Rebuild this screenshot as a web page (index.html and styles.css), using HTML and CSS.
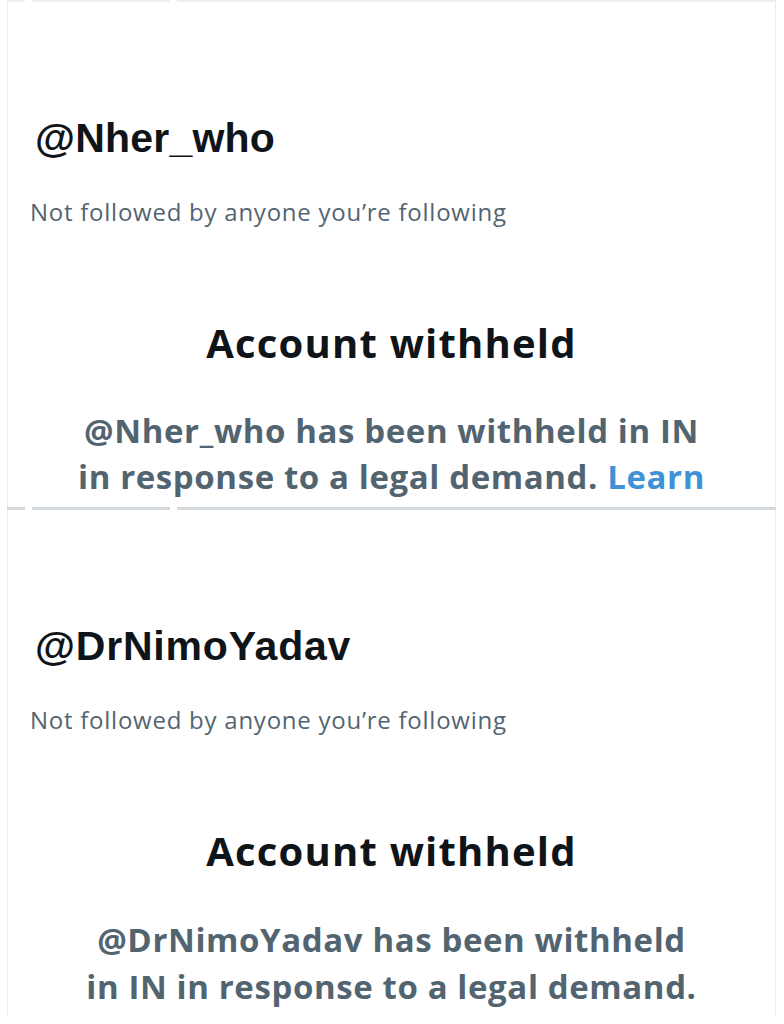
FILE: index.html
```html
<!DOCTYPE html>
<html lang="en">
<head>
<meta charset="utf-8">
<title>Account withheld</title>
<link rel="stylesheet" href="styles.css">
</head>
<body>
<div class="page">
  <div class="tabline tabline-top">
    <span class="seg seg-a"></span><span class="seg seg-b"></span><span class="seg seg-c"></span>
  </div>
  <section class="panel">
    <h1 class="handle">@Nher_who</h1>
    <p class="followers">Not followed by anyone you’re following</p>
    <h2 class="title">Account withheld</h2>
    <p class="body">
      <span class="line">@Nher_who has been withheld in IN</span>
      <span class="line">in response to a legal demand. <a class="link" href="#">Learn</a></span>
    </p>
  </section>
  <div class="tabline tabline-mid">
    <span class="seg seg-a"></span><span class="seg seg-b"></span><span class="seg seg-c"></span>
  </div>
  <section class="panel panel-second">
    <h1 class="handle">@DrNimoYadav</h1>
    <p class="followers">Not followed by anyone you’re following</p>
    <h2 class="title">Account withheld</h2>
    <p class="body">
      <span class="line">@DrNimoYadav has been withheld</span>
      <span class="line">in IN in response to a legal demand.</span>
    </p>
  </section>
</div>
</body>
</html>
```

FILE: styles.css
```css
* { box-sizing: border-box; }
html, body {
  margin: 0;
  padding: 0;
  background: #ffffff;
}
body {
  font-family: "Liberation Sans", Arial, sans-serif;
  color: #0f1419;
}
.page {
  width: 784px;
  height: 1024px;
  overflow: hidden;
}
.tabline {
  display: flex;
  margin: 0 8px 0 7px;
}
.tabline-top { height: 2px; }
.tabline-top .seg { background: #efefef; }
.tabline-mid { height: 3px; }
.tabline-mid .seg { background: #d3d8dc; }
.seg-a { width: 18px; }
.seg-b { width: 138px; margin-left: 7px; }
.seg-c { flex: 1; margin-left: 7px; }
.panel {
  margin: 0 8px 0 7px;
  border-left: 1px solid #ececec;
  border-right: 1px solid #ececec;
  height: 505px;
  padding: 111px 0 0 27px;
  overflow: hidden;
}
.handle {
  margin: 0;
  font-size: 41px;
  line-height: 50px;
  font-weight: 700;
  letter-spacing: 0.2px;
  color: #0f1419;
}
.panel-second .handle { letter-spacing: 0.8px; }
.followers {
  margin: 35px 0 0 -5px;
  font-family: "Open Sans", "Liberation Sans", sans-serif;
  font-size: 24px;
  line-height: 28px;
  font-weight: 400;
  letter-spacing: 0.75px;
  color: #536471;
}
.title {
  margin: 93px 0 0 -27px;
  text-align: center;
  font-family: "Open Sans", "Liberation Sans", sans-serif;
  font-size: 40px;
  line-height: 48px;
  font-weight: 700;
  letter-spacing: 1.2px;
  color: #0f1419;
}
.body {
  margin: 41px 0 0 -27px;
  text-align: center;
  font-family: "Open Sans", "Liberation Sans", sans-serif;
  font-size: 33px;
  line-height: 46px;
  font-weight: 700;
  letter-spacing: 0.6px;
  color: #536471;
}
.panel-second .body { line-height: 47px; }
.line { display: block; white-space: nowrap; }
.link {
  color: #3f92d6;
  text-decoration: none;
}
```
